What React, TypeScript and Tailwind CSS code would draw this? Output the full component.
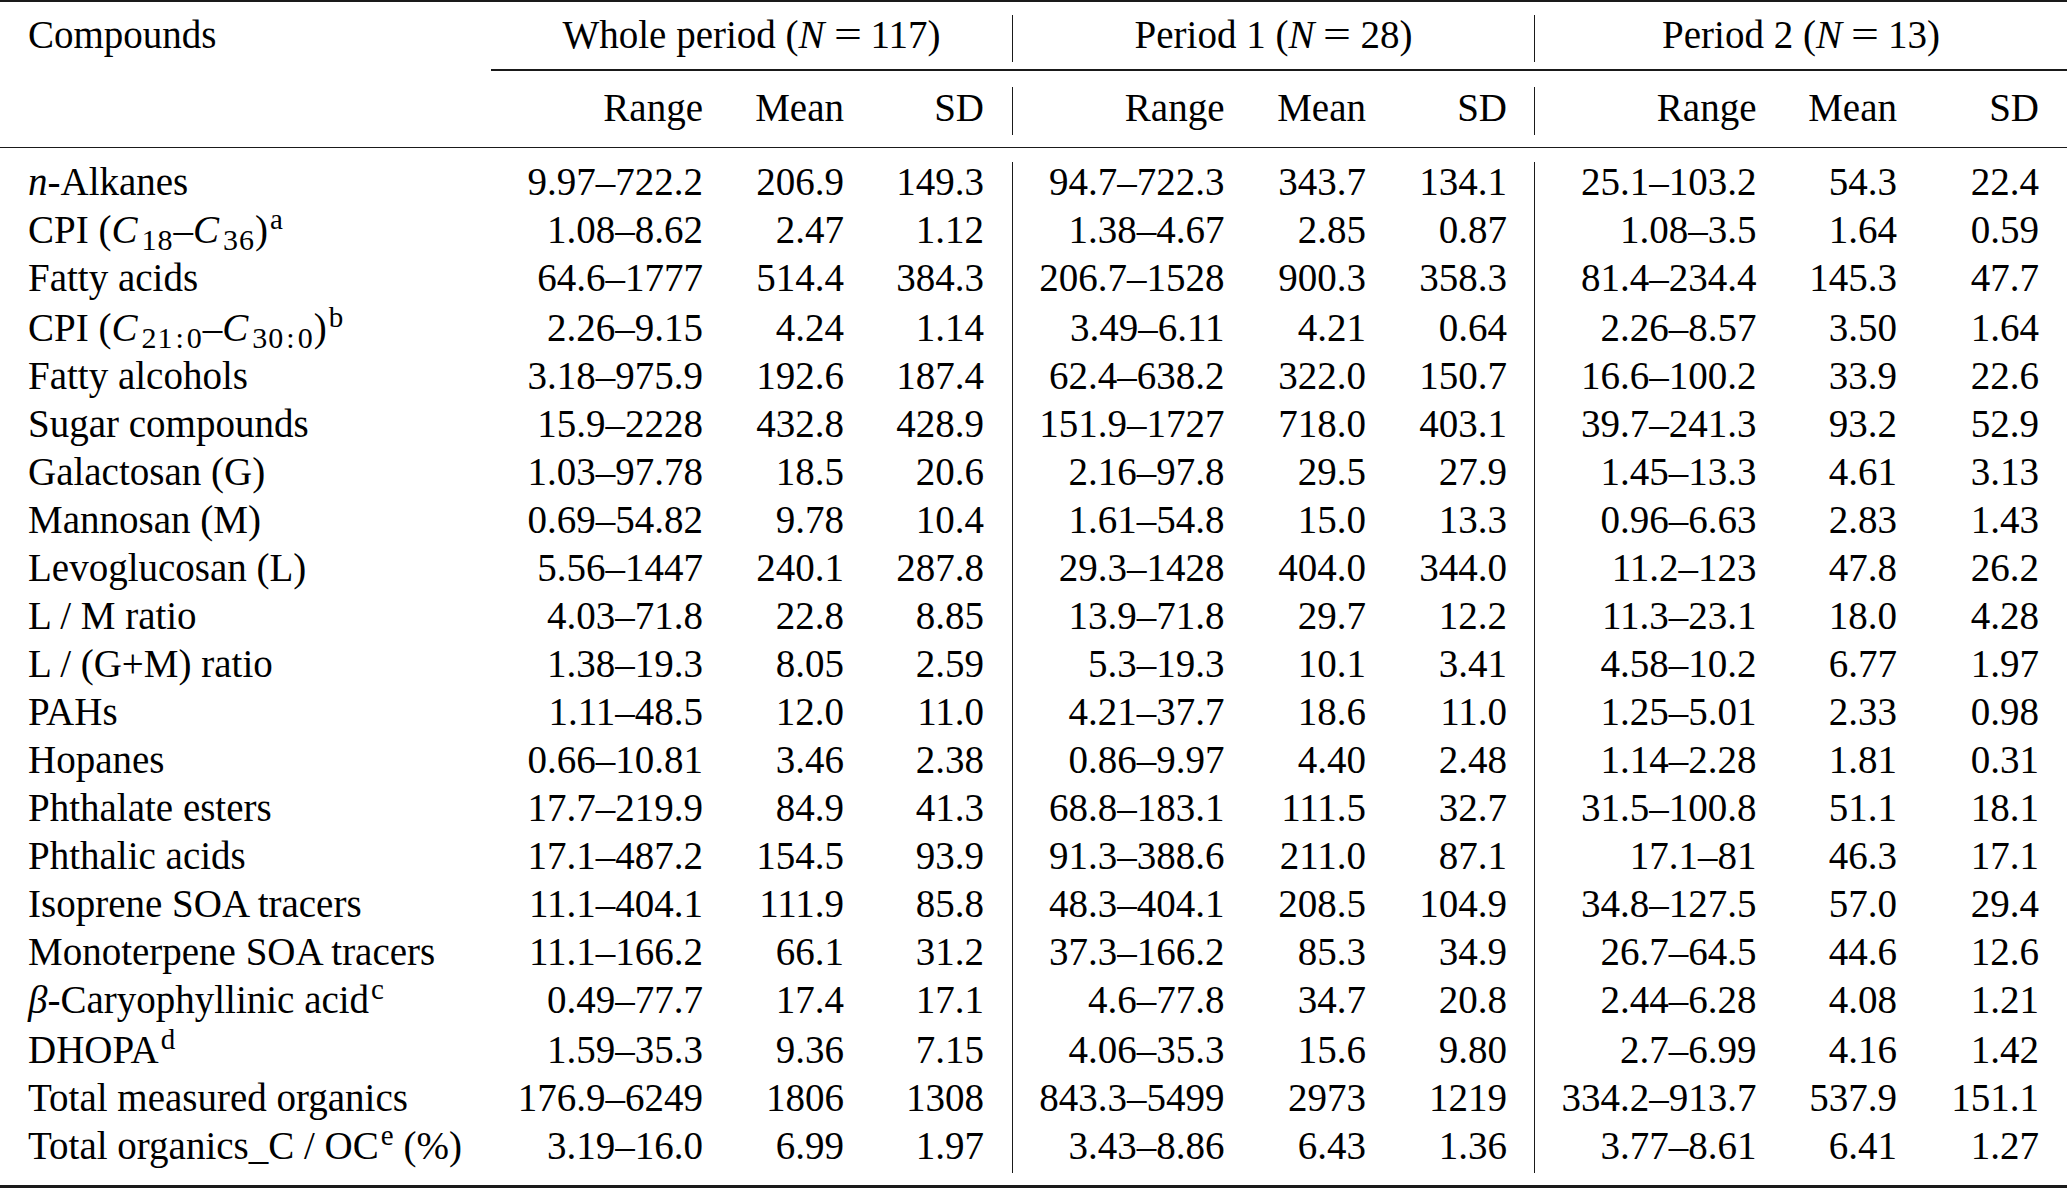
import React from "react";

type Vals = [string, string, string, string, string, string, string, string, string];

const Sub = ({ children }: { children: React.ReactNode }) => (
  <span className="relative top-[7px] ml-[4px] text-[30px] tracking-[1px] leading-none">{children}</span>
);

const Sup = ({ children }: { children: React.ReactNode }) => (
  <span className="relative -top-[14px] ml-[2px] text-[29px] leading-none">{children}</span>
);

const Colon = () => <span className="mx-[2px]">:</span>;

const Eq = () => <span className="inline-block mx-[12px] scale-x-[1.27]">=</span>;

const rows: { label: React.ReactNode; vals: Vals; h?: string }[] = [
  {
    label: (
      <>
        <i>n</i>-Alkanes
      </>
    ),
    vals: ["9.97–722.2", "206.9", "149.3", "94.7–722.3", "343.7", "134.1", "25.1–103.2", "54.3", "22.4"],
    h: "h-[44px] leading-[40px]",
  },
  {
    label: (
      <>
        CPI (<i>C</i>
        <Sub>18</Sub>–<i>C</i>
        <Sub>36</Sub>)<Sup>a</Sup>
      </>
    ),
    vals: ["1.08–8.62", "2.47", "1.12", "1.38–4.67", "2.85", "0.87", "1.08–3.5", "1.64", "0.59"],
  },
  {
    label: "Fatty acids",
    vals: ["64.6–1777", "514.4", "384.3", "206.7–1528", "900.3", "358.3", "81.4–234.4", "145.3", "47.7"],
  },
  {
    label: (
      <>
        CPI (<i>C</i>
        <Sub>
          21
          <Colon />0
        </Sub>
        –<i>C</i>
        <Sub>
          30
          <Colon />0
        </Sub>
        )<Sup>b</Sup>
      </>
    ),
    vals: ["2.26–9.15", "4.24", "1.14", "3.49–6.11", "4.21", "0.64", "2.26–8.57", "3.50", "1.64"],
    h: "h-[50px] leading-[52px]",
  },
  {
    label: "Fatty alcohols",
    vals: ["3.18–975.9", "192.6", "187.4", "62.4–638.2", "322.0", "150.7", "16.6–100.2", "33.9", "22.6"],
  },
  {
    label: "Sugar compounds",
    vals: ["15.9–2228", "432.8", "428.9", "151.9–1727", "718.0", "403.1", "39.7–241.3", "93.2", "52.9"],
  },
  {
    label: "Galactosan (G)",
    vals: ["1.03–97.78", "18.5", "20.6", "2.16–97.8", "29.5", "27.9", "1.45–13.3", "4.61", "3.13"],
  },
  {
    label: "Mannosan (M)",
    vals: ["0.69–54.82", "9.78", "10.4", "1.61–54.8", "15.0", "13.3", "0.96–6.63", "2.83", "1.43"],
  },
  {
    label: "Levoglucosan (L)",
    vals: ["5.56–1447", "240.1", "287.8", "29.3–1428", "404.0", "344.0", "11.2–123", "47.8", "26.2"],
  },
  {
    label: "L / M ratio",
    vals: ["4.03–71.8", "22.8", "8.85", "13.9–71.8", "29.7", "12.2", "11.3–23.1", "18.0", "4.28"],
  },
  {
    label: "L / (G+M) ratio",
    vals: ["1.38–19.3", "8.05", "2.59", "5.3–19.3", "10.1", "3.41", "4.58–10.2", "6.77", "1.97"],
  },
  {
    label: "PAHs",
    vals: ["1.11–48.5", "12.0", "11.0", "4.21–37.7", "18.6", "11.0", "1.25–5.01", "2.33", "0.98"],
  },
  {
    label: "Hopanes",
    vals: ["0.66–10.81", "3.46", "2.38", "0.86–9.97", "4.40", "2.48", "1.14–2.28", "1.81", "0.31"],
  },
  {
    label: "Phthalate esters",
    vals: ["17.7–219.9", "84.9", "41.3", "68.8–183.1", "111.5", "32.7", "31.5–100.8", "51.1", "18.1"],
  },
  {
    label: "Phthalic acids",
    vals: ["17.1–487.2", "154.5", "93.9", "91.3–388.6", "211.0", "87.1", "17.1–81", "46.3", "17.1"],
  },
  {
    label: "Isoprene SOA tracers",
    vals: ["11.1–404.1", "111.9", "85.8", "48.3–404.1", "208.5", "104.9", "34.8–127.5", "57.0", "29.4"],
  },
  {
    label: "Monoterpene SOA tracers",
    vals: ["11.1–166.2", "66.1", "31.2", "37.3–166.2", "85.3", "34.9", "26.7–64.5", "44.6", "12.6"],
  },
  {
    label: (
      <>
        <i>β</i>-Caryophyllinic acid<Sup>c</Sup>
      </>
    ),
    vals: ["0.49–77.7", "17.4", "17.1", "4.6–77.8", "34.7", "20.8", "2.44–6.28", "4.08", "1.21"],
  },
  {
    label: (
      <>
        DHOPA<Sup>d</Sup>
      </>
    ),
    vals: ["1.59–35.3", "9.36", "7.15", "4.06–35.3", "15.6", "9.80", "2.7–6.99", "4.16", "1.42"],
    h: "h-[50px] leading-[52px]",
  },
  {
    label: "Total measured organics",
    vals: ["176.9–6249", "1806", "1308", "843.3–5499", "2973", "1219", "334.2–913.7", "537.9", "151.1"],
  },
  {
    label: (
      <>
        Total organics_C / OC<Sup>e</Sup> (%)
      </>
    ),
    vals: ["3.19–16.0", "6.99", "1.97", "3.43–8.86", "6.43", "1.36", "3.77–8.61", "6.41", "1.27"],
    h: "h-[51px] leading-[48px]",
  },
];

// three stat columns per period group, right aligned
function Group1({ v }: { v: string[] }) {
  return (
    <>
      <div className="w-[212px] text-right">{v[0]}</div>
      <div className="w-[141px] text-right">{v[1]}</div>
      <div className="w-[140px] text-right">{v[2]}</div>
    </>
  );
}

function Group2({ v }: { v: string[] }) {
  return (
    <>
      <div className="w-[211.5px] text-right">{v[0]}</div>
      <div className="w-[141.5px] text-right">{v[1]}</div>
      <div className="w-[141px] text-right">{v[2]}</div>
    </>
  );
}

function Group3({ v }: { v: string[] }) {
  return (
    <>
      <div className="w-[221.5px] text-right">{v[0]}</div>
      <div className="w-[140.5px] text-right">{v[1]}</div>
      <div className="w-[142px] text-right">{v[2]}</div>
    </>
  );
}

export default function App() {
  const heads = ["Range", "Mean", "SD"];
  return (
    <div className="w-[2067px] h-[1189px] bg-white text-black font-['Liberation_Serif','Times_New_Roman',serif] text-[39px] whitespace-nowrap overflow-hidden">
      {/* top rule */}
      <div className="h-[2px] bg-[#1a1a1a]" />

      {/* header row 1 */}
      <div className="flex h-[67px] pt-[13px] leading-[40px]">
        <div className="w-[491px] pl-[28px]">Compounds</div>
        <div className="w-[522px] h-[47px] border-r-[1.5px] border-[#1a1a1a] text-center">
          Whole period (<i>N</i>
          <Eq />
          117)
        </div>
        <div className="w-[522px] h-[47px] border-r-[1.5px] border-[#1a1a1a] text-center">
          Period 1 (<i>N</i>
          <Eq />
          28)
        </div>
        <div className="flex-1 h-[47px] text-center">
          Period 2 (<i>N</i>
          <Eq />
          13)
        </div>
      </div>
      <div className="ml-[491px] h-[1.5px] bg-[#1a1a1a]" />

      {/* header row 2 */}
      <div className="flex h-[76px] pt-[16.5px] leading-[41px]">
        <div className="w-[491px]" />
        <div className="w-[522px] h-[48px] flex border-r-[1.5px] border-[#1a1a1a]">
          <Group1 v={heads} />
        </div>
        <div className="w-[522px] h-[48px] flex border-r-[1.5px] border-[#1a1a1a]">
          <Group2 v={heads} />
        </div>
        <div className="flex-1 h-[48px] flex">
          <Group3 v={heads} />
        </div>
      </div>
      <div className="h-[1.5px] bg-[#1a1a1a]" />

      {/* data rows */}
      <div className="pt-[14px]">
        {rows.map((r, i) => (
          <div key={i} className={`flex ${r.h ?? "h-[48px] leading-[48px]"}`}>
            <div className="w-[491px] pl-[28px]">{r.label}</div>
            <div className="w-[522px] flex border-r-[1.5px] border-[#1a1a1a]">
              <Group1 v={r.vals.slice(0, 3)} />
            </div>
            <div className="w-[522px] flex border-r-[1.5px] border-[#1a1a1a]">
              <Group2 v={r.vals.slice(3, 6)} />
            </div>
            <div className="flex-1 flex">
              <Group3 v={r.vals.slice(6, 9)} />
            </div>
          </div>
        ))}
      </div>

      {/* bottom rule */}
      <div className="mt-[12px] h-[2.5px] bg-[#1a1a1a]" />
    </div>
  );
}
